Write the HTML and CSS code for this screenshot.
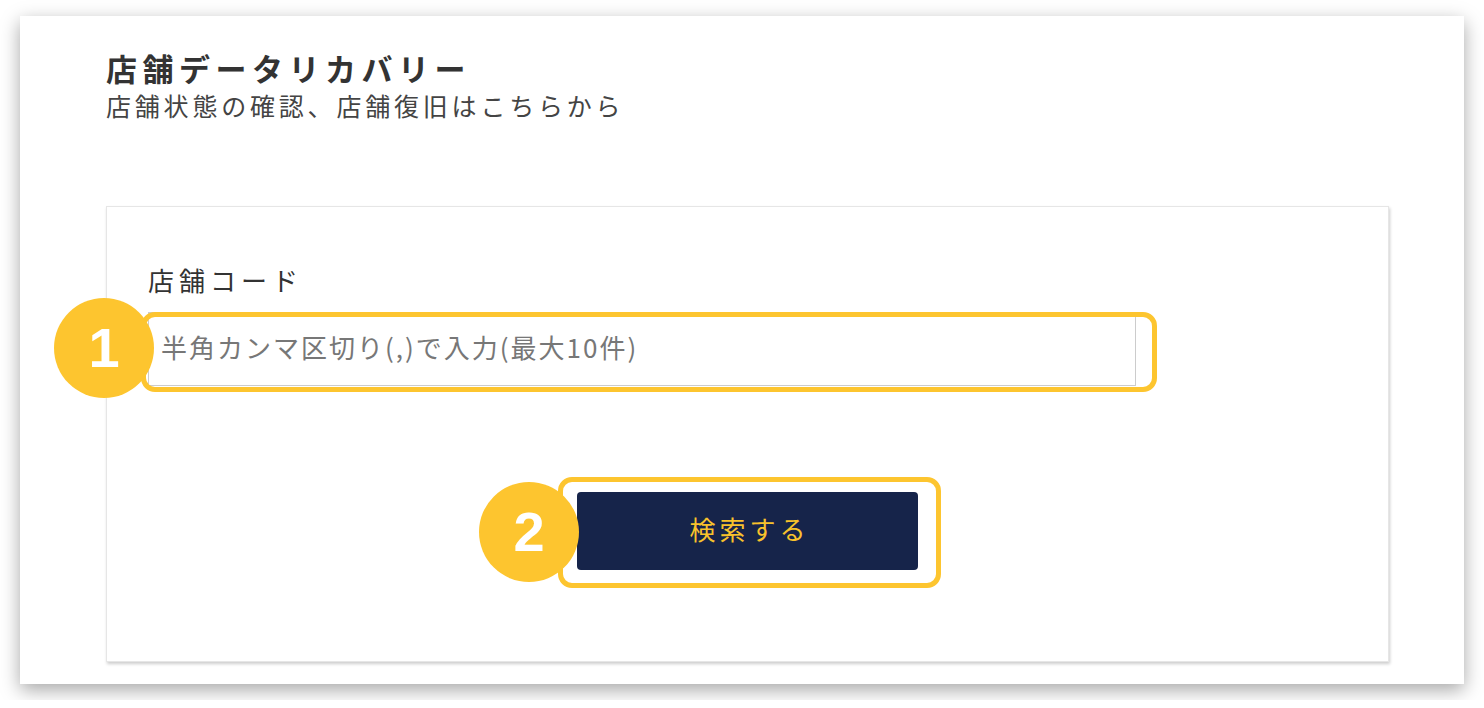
FILE: index.html
```html
<!DOCTYPE html>
<html lang="ja">
  <head>
    <meta charset="UTF-8" />
    <meta name="viewport" content="width=device-width, initial-scale=1.0" />
    <title>店舗データリカバリー</title>
    <link rel="stylesheet" href="styles.css">
  </head>
  <body>
    <div class="window">
      <div class="page-header">
        <h1>店舗データリカバリー</h1>
        <p>店舗状態の確認、店舗復旧はこちらから</p>
      </div>

      <div class="card">
        <label class="field-label" for="store-code">店舗コード</label>
        <div class="input-wrap">
          <input
            type="text"
            id="store-code"
            class="text-input"
            placeholder="半角カンマ区切り(,)で入力(最大10件)"
          />
          <span class="highlight highlight-input"></span>
          <span class="badge badge-input">1</span>
        </div>

        <div class="actions">
          <div class="button-wrap">
            <button id="search-btn" class="search-btn">検索する</button>
            <span class="highlight highlight-button"></span>
            <span class="badge badge-button">2</span>
          </div>
        </div>
      </div>
    </div>
  </body>
</html>
```

FILE: styles.css
```css
body {
  margin: 0;
  padding: 0;
  background-color: #fff;
  font-family: "Noto Sans CJK JP", "Noto Sans", "Liberation Sans", sans-serif;
  color: #333;
}

/* ventana con sombra */
.window {
  margin: 16px 20px;
  width: 1444px;
  height: 668px;
  box-sizing: border-box;
  padding: 32px 0 0 86px;
  background-color: #fff;
  box-shadow: 0 6px 18px rgba(0, 0, 0, 0.35);
}

.page-header h1 {
  margin: 0;
  font-size: 31px;
  line-height: 40px;
  letter-spacing: 5.5px;
  font-weight: bold;
  color: #333;
}
.page-header p {
  margin: 0;
  font-size: 25px;
  line-height: 34px;
  letter-spacing: 3.8px;
  color: #444;
}

.card {
  margin-top: 84px;
  width: 1283px;
  height: 456px;
  box-sizing: border-box;
  padding: 56px 0 0 41px;
  border: 1px solid #e6e6e6;
  box-shadow: 1px 2px 3px rgba(0, 0, 0, 0.2);
  background-color: #fff;
}

.field-label {
  display: block;
  font-size: 26px;
  line-height: 34px;
  letter-spacing: 5px;
  color: #333;
}

.input-wrap {
  position: relative;
  margin-top: 15px;
  width: 988px;
  height: 74px;
}
.text-input {
  width: 100%;
  height: 100%;
  box-sizing: border-box;
  border: 1px solid #ccc;
  padding: 0 12px 6px;
  font-family: inherit;
  font-size: 26px;
  letter-spacing: 2px;
  color: #333;
  outline: none;
}
.text-input::placeholder {
  color: #777;
}

.actions {
  display: flex;
  justify-content: center;
  margin-top: 106px;
  padding-right: 41px;
}
.button-wrap {
  position: relative;
}
.search-btn {
  display: block;
  width: 341px;
  height: 78px;
  padding: 0 0 6px 4px;
  border: none;
  border-radius: 4px;
  background-color: #16244a;
  color: #f8c22c;
  font-family: inherit;
  font-size: 26px;
  letter-spacing: 4px;
  cursor: pointer;
}

/* marcas amarillas de la captura */
.highlight {
  position: absolute;
  box-sizing: border-box;
  border: 5px solid #fdc52f;
  border-radius: 14px;
  pointer-events: none;
}
.highlight-input {
  left: -7px;
  top: 0;
  width: 1016px;
  height: 80px;
}
.highlight-button {
  left: -19px;
  top: -15px;
  width: 383px;
  height: 111px;
}

.badge {
  position: absolute;
  width: 100px;
  height: 100px;
  border-radius: 50%;
  background-color: #fdc52f;
  color: #fff;
  font-family: "Liberation Sans", Arial, sans-serif;
  font-weight: bold;
  font-size: 56px;
  line-height: 100px;
  text-align: center;
}
.badge-input {
  left: -94px;
  top: -14px;
}
.badge-button {
  left: -98px;
  top: -10px;
}
```
